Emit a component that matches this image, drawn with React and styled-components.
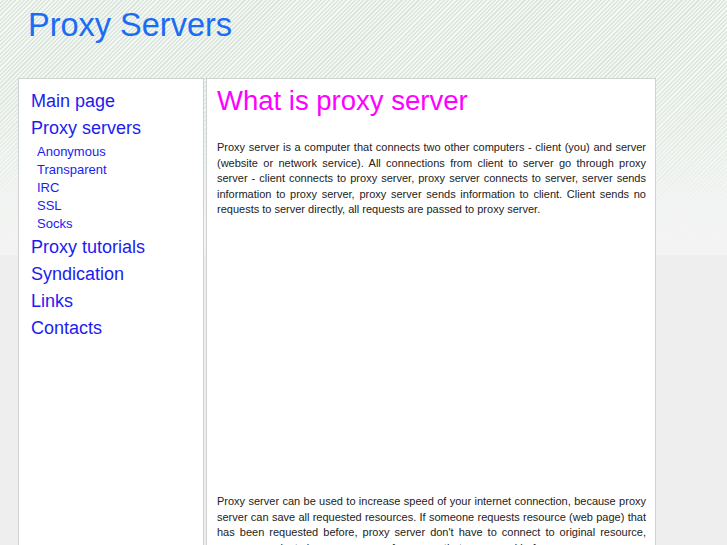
import React from "react";
import styled, { createGlobalStyle } from "styled-components";

const Global = createGlobalStyle`
  html, body { margin: 0; padding: 0; }
  body {
    background-color: #eeeeee;
    font-family: "Liberation Sans", Arial, sans-serif;
    height: 545px;
    overflow: hidden;
  }
`;

const Page = styled.div`
  position: relative;
  min-height: 545px;
  background:
    linear-gradient(to bottom, rgba(243,244,243,0) 0px, rgba(243,244,243,0) 70px, rgba(243,244,243,0.85) 200px, #f3f3f3 255px) 0 0 / 100% 255px no-repeat,
    repeating-linear-gradient(135deg, #f4f7f4 0px, #f4f7f4 1.5px, #dbe6dc 1.5px, #dbe6dc 3px) 0 0 / 100% 255px no-repeat,
    #eeeeee;
`;

const Wrap = styled.div`
  width: 638px;
  margin-left: 18px;
`;

const Header = styled.header`
  height: 78px;
  padding-left: 10px;
  box-sizing: border-box;
`;

const SiteTitle = styled.h1`
  margin: 0;
  padding-top: 6px;
  font-weight: normal;
  font-size: 32.5px;
  line-height: 38px;
  color: #1a6cf5;
`;

const Columns = styled.div`
  display: flex;
  gap: 2px;
  align-items: stretch;
`;

const Sidebar = styled.nav`
  width: 186px;
  box-sizing: border-box;
  background: #ffffff;
  border: 1px solid #cfd3cf;
  padding: 9px 0 0 12px;
  min-height: 480px;
`;

const SubList = styled.div`
  margin-top: 1px;
  margin-bottom: 1px;
`;

const NavLink = styled.a`
  display: block;
  font-size: ${p => (p.$sub ? "13px" : "18px")};
  line-height: ${p => (p.$sub ? "18px" : "27px")};
  padding-left: ${p => (p.$sub ? "6px" : "0")};
  color: #1c1cf0;
  text-decoration: none;
`;

const Main = styled.main`
  width: 450px;
  box-sizing: border-box;
  background: #ffffff;
  border: 1px solid #cfd3cf;
  padding: 7px 9px 0 10px;
  min-height: 480px;
`;

const Heading = styled.h2`
  margin: 0 0 24px;
  font-weight: normal;
  font-size: 27.5px;
  line-height: 30px;
  color: #ff00ff;
`;

const Para = styled.p`
  margin: 0;
  font-size: 11px;
  line-height: 15.5px;
  text-align: justify;
  color: #222222;
`;

const AdSlot = styled.div`
  height: 276.5px;
`;

export default function App() {
  return (
    <Page>
      <Global />
      <Wrap>
        <Header>
          <SiteTitle>Proxy Servers</SiteTitle>
        </Header>
        <Columns>
          <Sidebar>
            <NavLink href="#">Main page</NavLink>
            <NavLink href="#">Proxy servers</NavLink>
            <SubList>
              <NavLink $sub href="#">Anonymous</NavLink>
              <NavLink $sub href="#">Transparent</NavLink>
              <NavLink $sub href="#">IRC</NavLink>
              <NavLink $sub href="#">SSL</NavLink>
              <NavLink $sub href="#">Socks</NavLink>
            </SubList>
            <NavLink href="#">Proxy tutorials</NavLink>
            <NavLink href="#">Syndication</NavLink>
            <NavLink href="#">Links</NavLink>
            <NavLink href="#">Contacts</NavLink>
          </Sidebar>
          <Main>
            <Heading>What is proxy server</Heading>
            <Para>
              Proxy server is a computer that connects two other computers - client (you) and server
              (website or network service). All connections from client to server go through proxy
              server - client connects to proxy server, proxy server connects to server, server sends
              information to proxy server, proxy server sends information to client. Client sends no
              requests to server directly, all requests are passed to proxy server.
            </Para>
            <AdSlot />
            <Para>
              Proxy server can be used to increase speed of your internet connection, because proxy
              server can save all requested resources. If someone requests resource (web page) that
              has been requested before, proxy server don't have to connect to original resource,
              proxy server just gives you a copy of resource that was saved before.
            </Para>
          </Main>
        </Columns>
      </Wrap>
    </Page>
  );
}
